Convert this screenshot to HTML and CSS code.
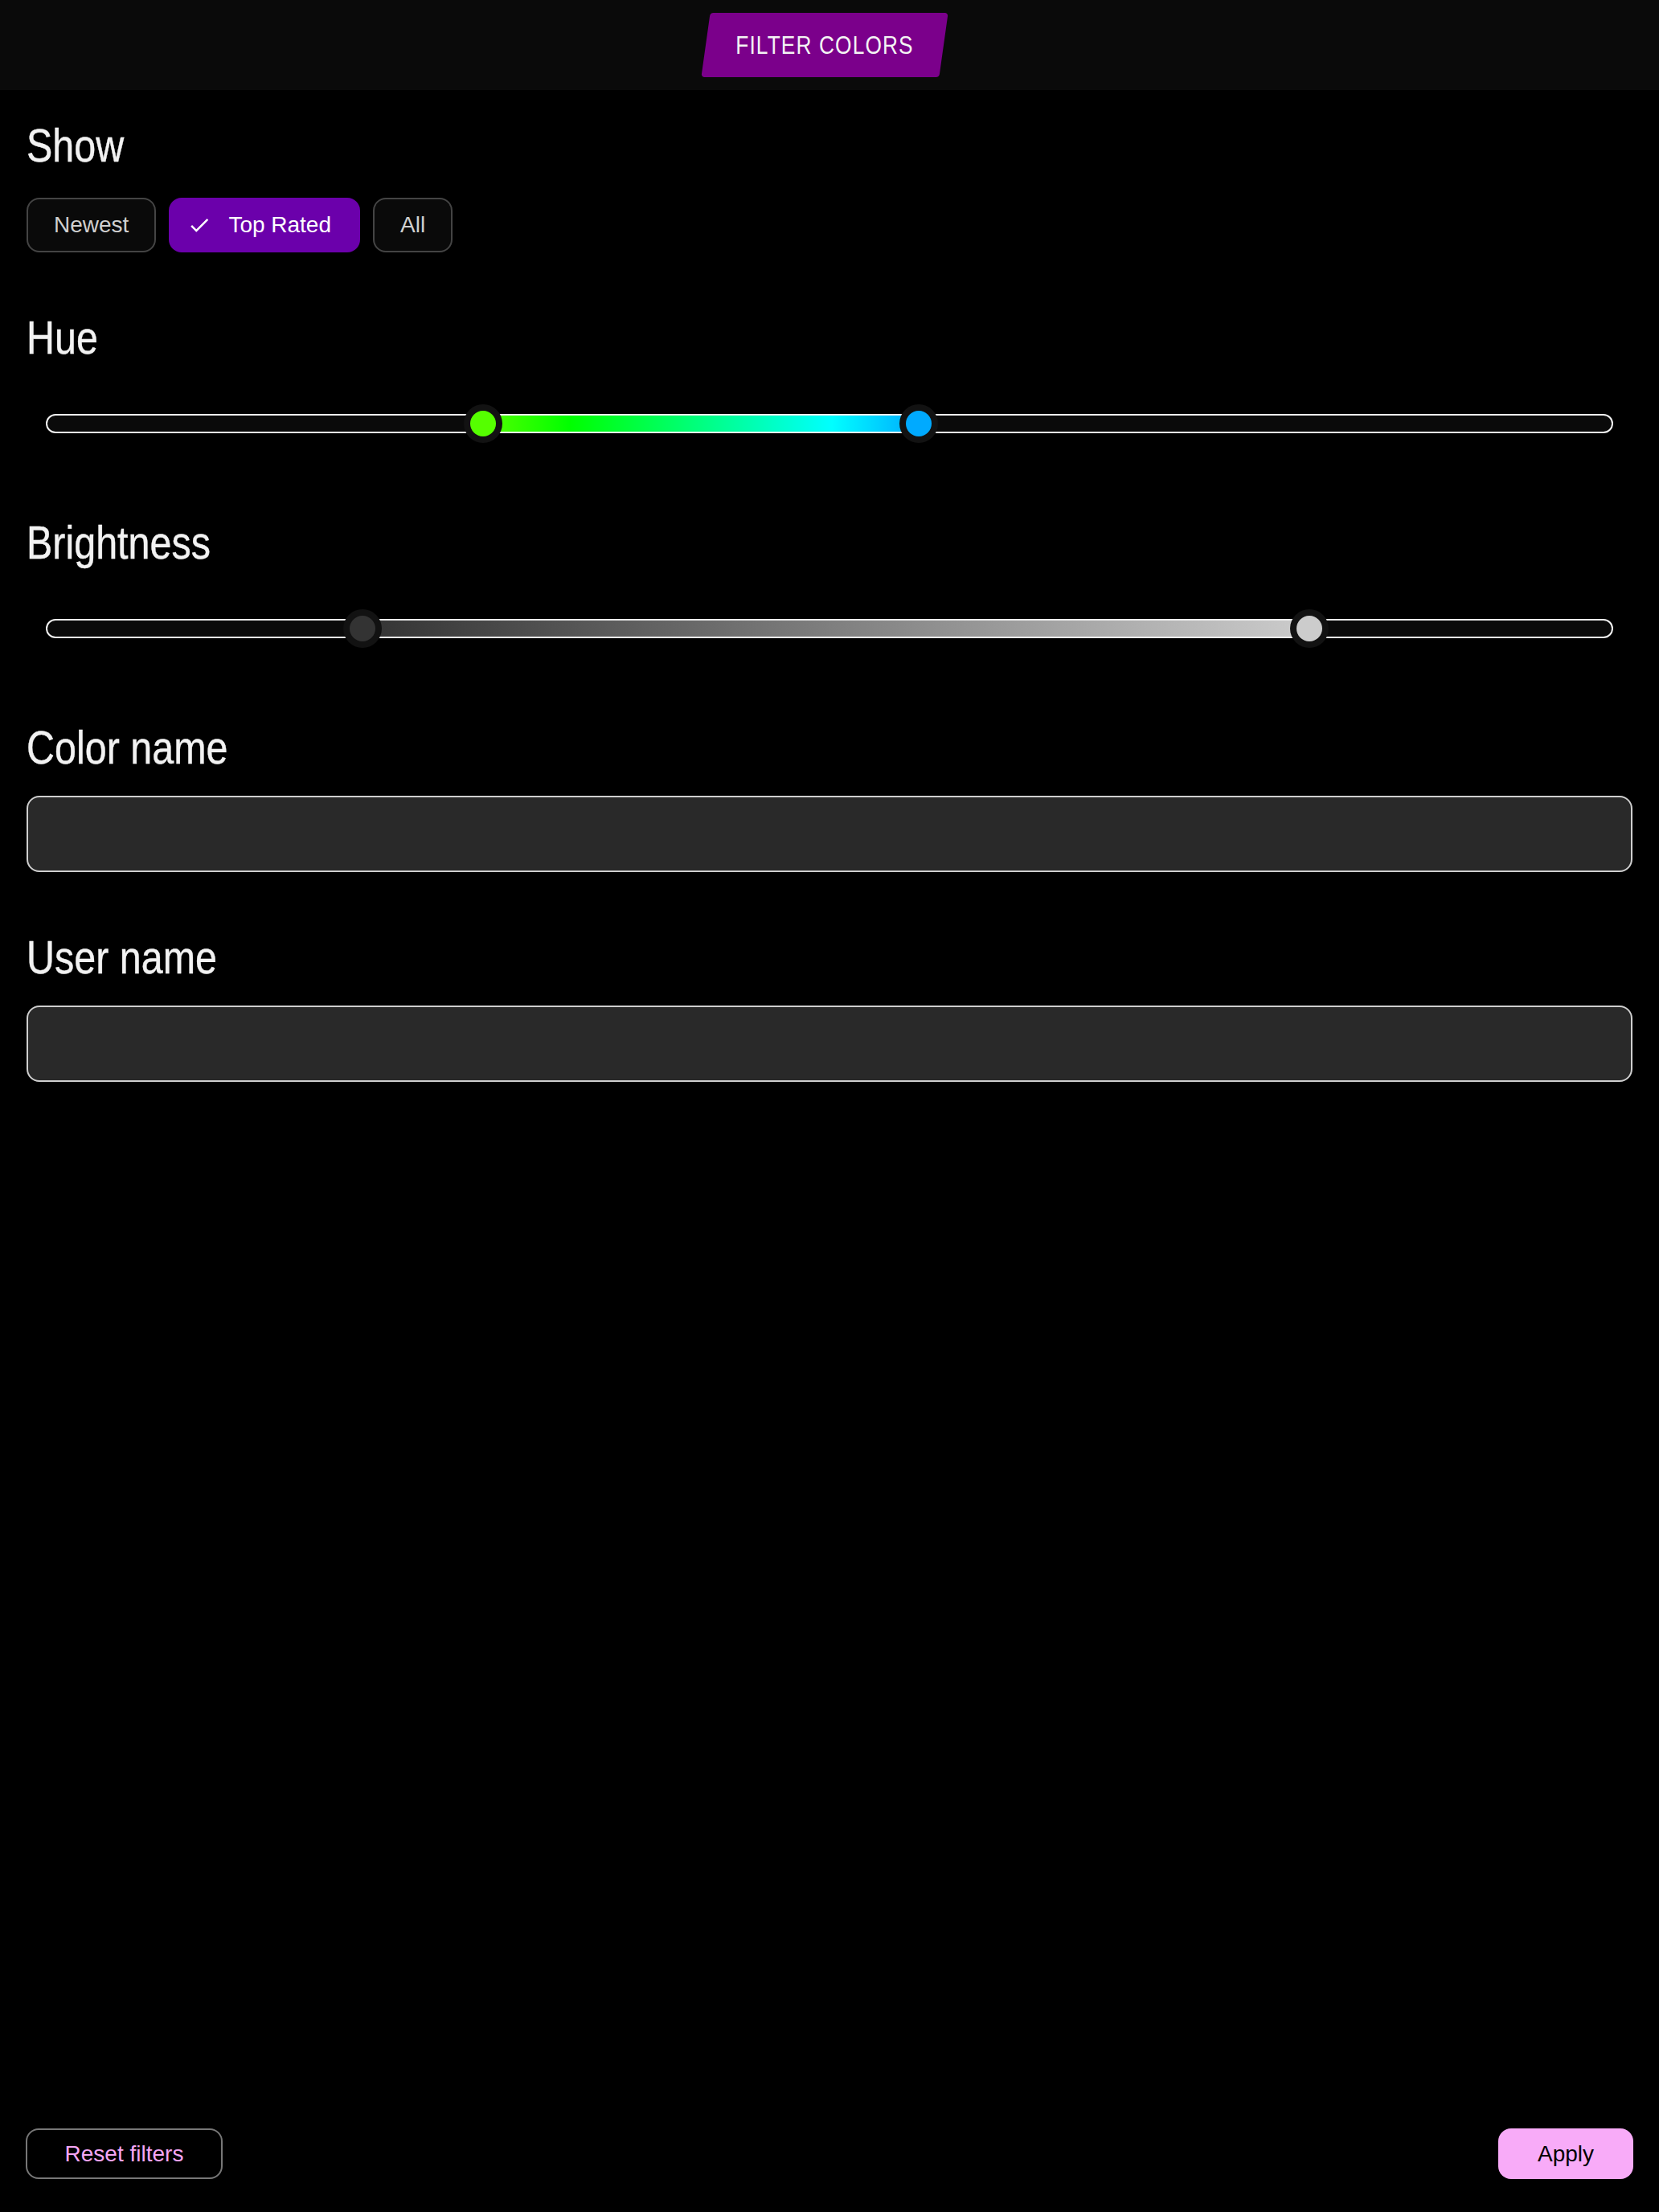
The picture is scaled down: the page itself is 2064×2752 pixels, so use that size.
FILE: index.html
```html
<!DOCTYPE html>
<html lang="en">
<head>
<meta charset="utf-8">
<title>Filter colors</title>
<link rel="stylesheet" href="styles.css">
</head>
<body>
<header class="topbar">
  <div class="tab"><span class="tab-label">FILTER COLORS</span></div>
</header>

<main class="panel">
  <section class="section">
    <h2 class="heading"><span class="heading-text">Show</span></h2>
    <div class="chips">
      <button class="chip">Newest</button>
      <button class="chip chip-selected">
        <svg class="chip-icon" viewBox="0 0 24 24" aria-hidden="true"><path d="M9 16.17L4.83 12l-1.42 1.41L9 19 21 7l-1.41-1.41z" fill="#fff"/></svg>
        Top Rated
      </button>
      <button class="chip">All</button>
    </div>
  </section>

  <section class="section">
    <h2 class="heading"><span class="heading-text">Hue</span></h2>
    <div class="slider">
      <div class="track">
        <div class="fill fill-hue" style="left: 27.85%; right: 44.3%;"></div>
        <span class="thumb" style="left: 27.85%;"><span class="thumb-dot dot-green"></span></span>
        <span class="thumb" style="left: 55.7%;"><span class="thumb-dot dot-blue"></span></span>
      </div>
    </div>
  </section>

  <section class="section">
    <h2 class="heading"><span class="heading-text">Brightness</span></h2>
    <div class="slider">
      <div class="track">
        <div class="fill fill-gray" style="left: 20.15%; right: 19.3%;"></div>
        <span class="thumb" style="left: 20.15%;"><span class="thumb-dot dot-dark"></span></span>
        <span class="thumb" style="left: 80.7%;"><span class="thumb-dot dot-light"></span></span>
      </div>
    </div>
  </section>

  <section class="section section-input">
    <h2 class="heading"><span class="heading-text">Color name</span></h2>
    <input class="field" type="text" aria-label="Color name">
  </section>

  <section class="section section-input">
    <h2 class="heading"><span class="heading-text">User name</span></h2>
    <input class="field" type="text" aria-label="User name">
  </section>
</main>

<footer class="actions">
  <button class="btn btn-outline">Reset filters</button>
  <button class="btn btn-primary">Apply</button>
</footer>
</body>
</html>
```

FILE: styles.css
```css
* { box-sizing: border-box; }

html, body {
  margin: 0;
  padding: 0;
  background: #000;
}

body {
  height: 2752px;
  display: flex;
  flex-direction: column;
  font-family: "Liberation Sans", Arial, sans-serif;
  color: #f2f2f2;
}

.topbar {
  height: 112px;
  background: #0a0a0a;
  display: flex;
  align-items: center;
  justify-content: center;
  padding-right: 12px;
  flex-shrink: 0;
}

.tab {
  width: 296px;
  height: 80px;
  background: #7b008b;
  border-radius: 4px;
  transform: skewX(-8deg);
  display: flex;
  align-items: center;
  justify-content: center;
}

.tab-label {
  display: inline-block;
  white-space: nowrap;
  transform: skewX(8deg) scaleX(0.82);
  font-family: "Liberation Sans", Arial, sans-serif;
  font-size: 32px;
  letter-spacing: 1.4px;
  color: #f4f4f4;
}

.panel {
  display: flex;
  flex-direction: column;
  gap: 74px;
  padding: 37px 33px 0;
}

.section {
  display: flex;
  flex-direction: column;
  gap: 33px;
}

.section-input { gap: 28px; }

.heading {
  margin: 0;
  font-family: "Liberation Sans", Arial, sans-serif;
  font-weight: 400;
  font-size: 57px;
  line-height: 64px;
  color: #f2f2f2;
  white-space: nowrap;
  -webkit-text-stroke: 0.4px #f2f2f2;
}

.heading-text {
  display: inline-block;
  transform: scaleX(0.85);
  transform-origin: left center;
}

.chips {
  display: flex;
  gap: 16px;
}

.chip {
  height: 68px;
  padding: 0 32px;
  border: 2px solid #444;
  border-radius: 16px;
  background: #0a0a0a;
  color: #d0d0d0;
  font-family: "Liberation Sans", Arial, sans-serif;
  font-size: 28px;
  display: flex;
  align-items: center;
}

.chip-selected {
  background: #6b00ab;
  border-color: #6b00ab;
  color: #fff;
  padding: 0 34px 0 21px;
  gap: 21px;
}

.chip-icon {
  width: 30px;
  height: 30px;
}

.slider {
  height: 84px;
  padding: 0 24px;
  display: flex;
  align-items: center;
}

.track {
  position: relative;
  width: 100%;
  height: 24px;
  border: 2px solid #f0f0f0;
  border-radius: 12px;
  background: #0a0a0a;
}

.fill {
  position: absolute;
  top: 0;
  bottom: 0;
}

.fill-hue {
  background: linear-gradient(90deg, #55ff00 0%, #00ff00 20%, #00ff80 50%, #00ffff 80%, #00aaff 100%);
}

.fill-gray {
  background: linear-gradient(90deg, #333333, #cccccc);
}

.thumb {
  position: absolute;
  top: 50%;
  width: 48px;
  height: 48px;
  margin: -24px 0 0 -24px;
  border-radius: 50%;
  background: #121212;
  display: flex;
  align-items: center;
  justify-content: center;
}

.thumb-dot {
  width: 32px;
  height: 32px;
  border-radius: 50%;
}

.dot-green { background: #55ff00; }
.dot-blue { background: #00aaff; }
.dot-dark { background: #333333; }
.dot-light { background: #cccccc; }

.field {
  display: block;
  width: 100%;
  height: 95px;
  border: 2px solid #cfcfcf;
  border-radius: 16px;
  background: #292929;
  color: #f2f2f2;
  font-family: "Liberation Sans", Arial, sans-serif;
  font-size: 28px;
  padding: 0 24px;
  outline: none;
}

.actions {
  margin-top: auto;
  display: flex;
  justify-content: space-between;
  padding: 0 32px 41px;
}

.btn {
  height: 63px;
  border-radius: 16px;
  font-family: "Liberation Sans", Arial, sans-serif;
  font-size: 28px;
  display: flex;
  align-items: center;
  justify-content: center;
}

.btn-outline {
  width: 245px;
  background: transparent;
  border: 2px solid #777;
  color: #f5a6f5;
}

.btn-primary {
  width: 168px;
  background: #f8abf8;
  border: none;
  color: #000;
}
```
